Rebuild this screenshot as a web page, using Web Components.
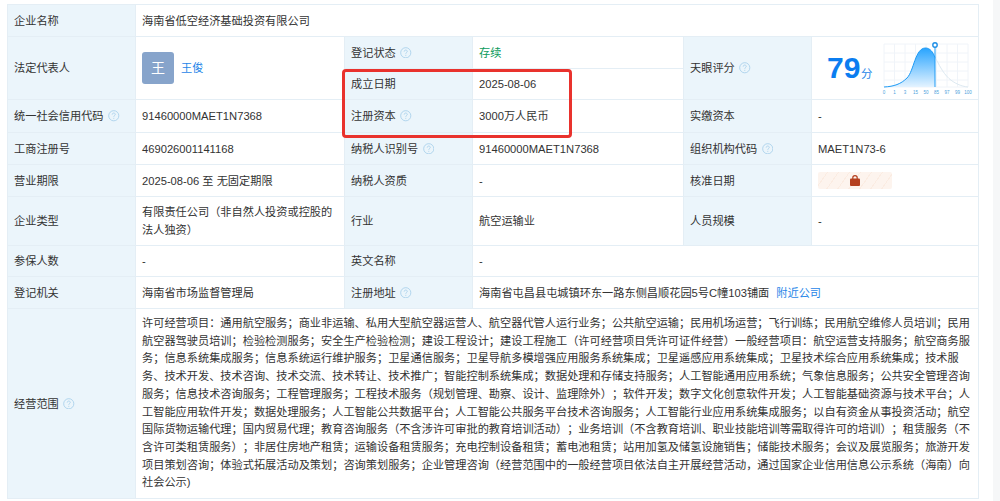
<!DOCTYPE html>
<html lang="zh">
<head>
<meta charset="utf-8">
<title>企业信息</title>
<style>
  html, body { margin: 0; padding: 0; background: #fff; }
  body {
    font: 11.2px/18px "Liberation Sans", "Noto Sans CJK SC", sans-serif;
    color: #333;
    overflow: hidden;
    text-spacing-trim: space-all;
  }
</style>
</head>
<body>
<page-frame>
  <info-table>
    <info-label>企业名称</info-label>
    <info-value cols="5">海南省低空经济基础投资有限公司</info-value>

    <info-label rows="2">法定代表人</info-label>
    <info-value rows="2"><rep-person name="王俊" initial="王"></rep-person></info-value>
    <info-label help>登记状态</info-label>
    <info-value><span style="color:#0b9b5c">存续</span></info-value>
    <info-label rows="2" help>天眼评分</info-label>
    <info-value rows="2" flush><score-chart score="79"></score-chart></info-value>

    <info-label>成立日期</info-label>
    <info-value>2025-08-06</info-value>

    <info-label help>统一社会信用代码</info-label>
    <info-value>91460000MAET1N7368</info-value>
    <info-label help>注册资本</info-label>
    <info-value>3000万人民币</info-value>
    <info-label>实缴资本</info-label>
    <info-value>-</info-value>

    <info-label>工商注册号</info-label>
    <info-value>469026001141168</info-value>
    <info-label help>纳税人识别号</info-label>
    <info-value>91460000MAET1N7368</info-value>
    <info-label help>组织机构代码</info-label>
    <info-value>MAET1N73-6</info-value>

    <info-label>营业期限</info-label>
    <info-value>2025-08-06 至 无固定期限</info-value>
    <info-label>纳税人资质</info-label>
    <info-value>-</info-value>
    <info-label>核准日期</info-label>
    <info-value><lock-chip></lock-chip></info-value>

    <info-label>企业类型</info-label>
    <info-value>有限责任公司（非自然人投资或控股的法人独资）</info-value>
    <info-label>行业</info-label>
    <info-value>航空运输业</info-value>
    <info-label>人员规模</info-label>
    <info-value>-</info-value>

    <info-label>参保人数</info-label>
    <info-value>-</info-value>
    <info-label>英文名称</info-label>
    <info-value cols="3">-</info-value>

    <info-label>登记机关</info-label>
    <info-value>海南省市场监督管理局</info-value>
    <info-label help>注册地址</info-label>
    <info-value cols="3">海南省屯昌县屯城镇环东一路东侧昌顺花园5号C幢103铺面<a class="near" style="color:#1f86e8;margin-left:7px">附近公司</a></info-value>

    <info-label help>经营范围</info-label>
    <info-value cols="5" dense>许可经营项目：通用航空服务；商业非运输、私用大型航空器运营人、航空器代管人运行业务；公共航空运输；民用机场运营；飞行训练；民用航空维修人员培训；民用航空器驾驶员培训；检验检测服务；安全生产检验检测；建设工程设计；建设工程施工（许可经营项目凭许可证件经营）一般经营项目：航空运营支持服务；航空商务服务；信息系统集成服务；信息系统运行维护服务；卫星通信服务；卫星导航多模增强应用服务系统集成；卫星遥感应用系统集成；卫星技术综合应用系统集成；技术服务、技术开发、技术咨询、技术交流、技术转让、技术推广；智能控制系统集成；数据处理和存储支持服务；人工智能通用应用系统；气象信息服务；公共安全管理咨询服务；信息技术咨询服务；工程管理服务；工程技术服务（规划管理、勘察、设计、监理除外）；软件开发；数字文化创意软件开发；人工智能基础资源与技术平台；人工智能应用软件开发；数据处理服务；人工智能公共数据平台；人工智能公共服务平台技术咨询服务；人工智能行业应用系统集成服务；以自有资金从事投资活动；航空国际货物运输代理；国内贸易代理；教育咨询服务（不含涉许可审批的教育培训活动）；业务培训（不含教育培训、职业技能培训等需取得许可的培训）；租赁服务（不含许可类租赁服务）；非居住房地产租赁；运输设备租赁服务；充电控制设备租赁；蓄电池租赁；站用加氢及储氢设施销售；储能技术服务；会议及展览服务；旅游开发项目策划咨询；体验式拓展活动及策划；咨询策划服务；企业管理咨询（经营范围中的一般经营项目依法自主开展经营活动，通过国家企业信用信息公示系统（海南）向社会公示)</info-value>

    <red-mark></red-mark>
  </info-table>
</page-frame>

<script>
"use strict";

// 공통: 클래스 안의 문자열을 쉐도우 루트에 넣는다
function mount(host, html) {
  host.attachShadow({ mode: "open" }).innerHTML = html;
}

class PageFrame extends HTMLElement {
  constructor() {
    super();
    mount(this, `
      <style>
        :host { display: flex; justify-content: space-between; height: 501px; }
        .content { padding: 4px 0 0 7px; }
        .rail { width: 7px; background: #f6f7f8; }
      </style>
      <div class="content"><slot></slot></div>
      <div class="rail"></div>
    `);
  }
}

class InfoTable extends HTMLElement {
  constructor() {
    super();
    mount(this, `
      <style>
        :host {
          display: grid;
          position: relative;
          grid-template-columns: 127px 208px 127px 210px 127px 166px;
          grid-template-rows: 31px 31px 30px 32px 31px 31px 48px 30px 31px 189px;
          gap: 1px;
          padding: 1px;
          background: #e4eef5;
        }
      </style>
      <slot></slot>
    `);
  }
}

class InfoLabel extends HTMLElement {
  constructor() {
    super();
    const help = this.hasAttribute("help") ? "<help-icon></help-icon>" : "";
    mount(this, `
      <style>
        :host {
          display: flex;
          align-items: center;
          gap: 4.5px;
          padding-left: 6px;
          background: #ebf5fb;
        }
        :host([rows="2"]) { grid-row: span 2; }
      </style>
      <slot></slot>${help}
    `);
  }
}

class InfoValue extends HTMLElement {
  constructor() {
    super();
    mount(this, `
      <style>
        :host {
          display: flex;
          align-items: center;
          padding: 0 6px;
          background: #fff;
        }
        :host([flush]) { padding: 0; }
        :host([dense]) { line-height: 17.7px; }
        :host([rows="2"]) { grid-row: span 2; }
        :host([cols="3"]) { grid-column: span 3; }
        :host([cols="5"]) { grid-column: span 5; }
        div { min-width: 0; }
      </style>
      <div><slot></slot></div>
    `);
  }
}

class HelpIcon extends HTMLElement {
  constructor() {
    super();
    mount(this, `
      <style>
        :host { display: inline-flex; width: 11.5px; height: 11.5px; }
        svg { display: block; }
      </style>
      <svg width="11.5" height="11.5" viewBox="0 0 12 12" fill="none" stroke="#aed3ec">
        <circle cx="6" cy="6" r="5.3"/>
        <path d="M4.4 4.8c0-1 .7-1.6 1.6-1.6s1.6.6 1.6 1.4c0 1.2-1.6 1.2-1.6 2.5"/>
        <path d="M6 8.2v1"/>
      </svg>
    `);
  }
}

class RepPerson extends HTMLElement {
  constructor() {
    super();
    mount(this, `
      <style>
        :host { display: flex; align-items: center; gap: 7px; }
        .avatar {
          display: flex;
          align-items: center;
          justify-content: center;
          width: 32px;
          height: 32px;
          border-radius: 3px;
          background: #87a4cb;
          color: #fff;
          font-size: 14px;
        }
        .name { color: #1f86e8; }
      </style>
      <span class="avatar">${this.getAttribute("initial")}</span>
      <span class="name">${this.getAttribute("name")}</span>
    `);
  }
}

class ScoreChart extends HTMLElement {
  constructor() {
    super();
    const ticks = [0, 1, 3, 15, 50, 85, 97, 99, 100];
    const gridX = [0, 10.5, 21, 31.5, 42, 52.5, 63, 73.5, 84];
    const gridY = [4, 13, 22, 31, 40, 47];
    const lines = gridX.map((x) => `<path d="M${x} 4V47"/>`).join("")
      + gridY.map((y) => `<path d="M0 ${y}H84"/>`).join("");
    const labels = ticks.map((t, i) =>
      `<text x="${gridX[i]}" y="53.5" text-anchor="middle">${t}</text>`).join("");
    mount(this, `
      <style>
        :host { display: flex; align-items: center; width: 166px; height: 62px; position: relative; }
        .score {
          margin-left: 15px;
          width: 32px;
          color: #0b7df0;
          font: bold 30px/30px "Liberation Sans", sans-serif;
        }
        .unit { margin: 11px 0 0 2px; color: #1f86e8; font-size: 11.5px; }
        svg { display: block; margin-left: 11px; overflow: visible; }
        text { font: 4.5px "Liberation Sans", sans-serif; fill: #4d9fdc; }
      </style>
      <span class="score">${this.getAttribute("score")}</span>
      <span class="unit">分</span>
      <svg width="88" height="56" viewBox="0 0 88 56">
        <defs>
          <linearGradient id="fill" x1="0" y1="0" x2="0" y2="1">
            <stop offset="0" stop-color="#28a4ff"/>
            <stop offset="1" stop-color="#e4f3ff"/>
          </linearGradient>
        </defs>
        <g stroke="#f0f4f9" stroke-width="1" fill="none">${lines}</g>
        <path d="M51 17.5C55 24 58 32 65 38.5C70 43 77 46.4 84 47" fill="none" stroke="#dde9f1" stroke-width="1"/>
        <path d="M0 47C10 46.5 17 44 23 38C30 31 31 8 41.5 8C46 8 49 12 51 17.5V47Z" fill="url(#fill)"/>
        <path d="M0 47C10 46.5 17 44 23 38C30 31 31 8 41.5 8C46 8 49 12 51 17.5" fill="none" stroke="#1f9bf5" stroke-width="1"/>
        <path d="M51 6V47" stroke="#1f9bf5" stroke-width="1"/>
        <circle cx="51" cy="5" r="2.2" fill="#fff" stroke="#1f8fe6" stroke-width="1.4"/>
        ${labels}
      </svg>
    `);
  }
}

class LockChip extends HTMLElement {
  constructor() {
    super();
    mount(this, `
      <style>
        :host {
          display: flex;
          align-items: center;
          justify-content: center;
          width: 74px;
          height: 17px;
          border-radius: 2px;
          background: repeating-linear-gradient(-55deg, #fdf4ee 0 8px, #fbece2 8px 9px);
        }
        svg { display: block; }
      </style>
      <svg width="10" height="11" viewBox="0 0 10 11">
        <path d="M2.8 4V2.8a2.2 2.2 0 0 1 4.4 0V4" fill="none" stroke="#b5401f" stroke-width="1.2"/>
        <rect x="0" y="3.6" width="10" height="7.4" rx="1" fill="#b5401f"/>
      </svg>
    `);
  }
}

// 빨간 강조 박스: 표 위에 겹쳐 그린다
class RedMark extends HTMLElement {
  constructor() {
    super();
    mount(this, `
      <style>
        :host {
          position: absolute;
          left: 335px;
          top: 65px;
          width: 224px;
          height: 63px;
          border: 3px solid #e9322d;
          border-radius: 4px;
          pointer-events: none;
        }
      </style>
    `);
  }
}

customElements.define("page-frame", PageFrame);
customElements.define("info-table", InfoTable);
customElements.define("info-label", InfoLabel);
customElements.define("info-value", InfoValue);
customElements.define("help-icon", HelpIcon);
customElements.define("rep-person", RepPerson);
customElements.define("score-chart", ScoreChart);
customElements.define("lock-chip", LockChip);
customElements.define("red-mark", RedMark);
</script>
</body>
</html>
